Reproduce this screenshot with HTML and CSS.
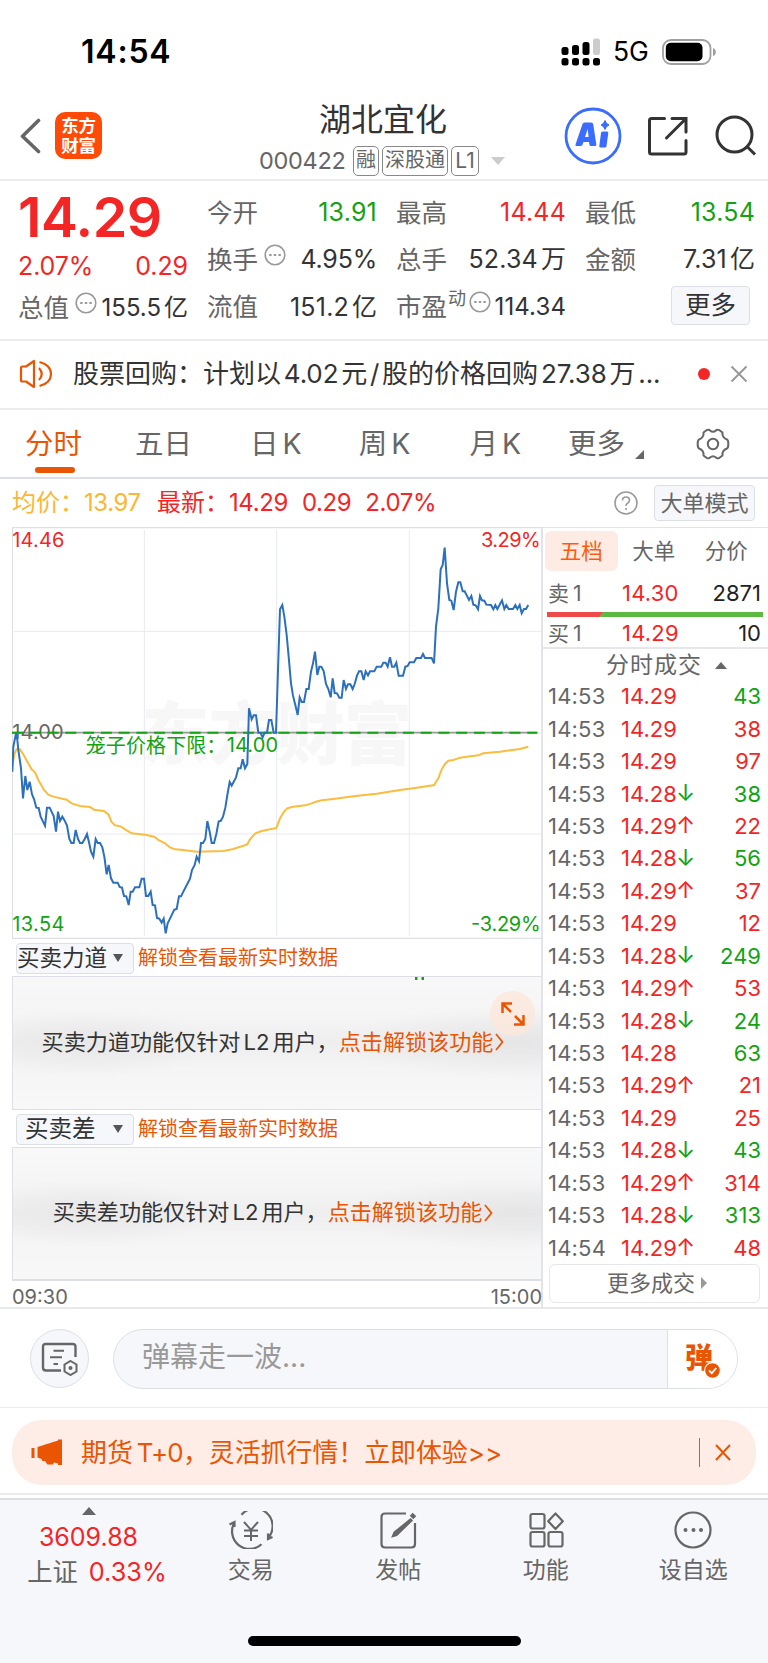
FILE: index.html
```html
<!DOCTYPE html>
<html lang="zh-CN">
<head>
<meta charset="utf-8">
<title>湖北宜化 000422</title>
<link rel="stylesheet" href="styles.css">
</head>
<body>
<div class="status">
  <span class="clock">14:54</span>
  <svg class="signal" width="41" height="28" viewBox="0 0 41 28"><g fill="#000"><rect x="0.5" y="9" width="7" height="8" rx="2.5"/><rect x="11" y="7" width="7" height="10" rx="2.5"/><rect x="21.5" y="4" width="7" height="13" rx="2.5"/><rect x="0.5" y="20" width="7" height="7.5" rx="2.5"/><rect x="11" y="20" width="7" height="7.5" rx="2.5"/><rect x="21.5" y="20" width="7" height="7.5" rx="2.5"/><rect x="32" y="20" width="7" height="7.5" rx="2.5"/></g><rect x="32" y="0.5" width="7" height="16.5" rx="2.5" fill="#ccc"/></svg>
  <span class="net">5G</span>
  <svg class="battery" width="54" height="26" viewBox="0 0 54 26"><rect x="1" y="1" width="47.500" height="24" rx="8" fill="none" stroke="#a0a0a0" stroke-width="1.800"/><rect x="3.800" y="3.800" width="36.700" height="18.400" rx="5" fill="#000"/><path d="M51 9Q53.800 10 53.800 13T51 17z" fill="#a0a0a0"/></svg>
</div>

<header class="head">
  <div class="left">
    <svg width="22" height="36" viewBox="0 0 22 36" fill="none" stroke="#666" stroke-width="3.600" stroke-linecap="round" stroke-linejoin="round"><path d="M19.500 2.500L3.500 18.200L19.500 33.500"/></svg>
    <span class="logo"><b>东方</b><b>财富</b></span>
  </div>
  <div class="title">
    <h1>湖北宜化</h1>
    <div class="code"><span class="num">000422</span><i>融</i><i class="w3">深股通</i><i class="w2">L1</i><svg width="14" height="8" viewBox="0 0 14 8"><path d="M0 0H14L7 8z" fill="#ccc"/></svg></div>
  </div>
  <div class="tools">
    <svg width="58" height="58" viewBox="0 0 58 58"><circle cx="29" cy="29" r="27" fill="none" stroke="#3a6cff" stroke-width="2.800"/><path d="M20.500 15.500H27Q29 15.500 29.300 17.500L32.300 37.500Q32.300 39 31 39H27Q25.500 39 25.400 37.500L25 35H19.500L18.500 37.500Q18 39 16.500 39H12.500Q11 39 11.500 37.500L18.500 17Q19 15.500 20.500 15.500zM23.700 22L21 30H24.600z" fill="#3a6cff" fill-rule="evenodd"/><path d="M38.500 24.500H43Q44.500 24.500 44.300 26L42.500 39Q42.300 40.500 41 40.500H36.500Q35 40.500 35.300 39L37 26Q37.200 24.500 38.500 24.500z" fill="#3a6cff"/><path d="M41 13.500Q42 17 45 18Q42 19 41 22.500Q40 19 37 18Q40 17 41 13.500z" fill="#3a6cff" stroke="#3a6cff"/></svg>
    <svg width="42" height="42" viewBox="0 0 42 42" fill="none" stroke="#333" stroke-width="3"><path d="M17.500 3.500H4.500Q2.500 3.500 2.500 5.500V37Q2.500 39 4.500 39H37Q39 39 39 37V25.500M25 3.500H39V17M38.500 4L19.500 23" stroke-linecap="round"/></svg>
    <svg width="42" height="42" viewBox="0 0 42 42" fill="none" stroke="#333" stroke-width="3"><circle cx="19.500" cy="19.500" r="17.500"/><path d="M31.500 31L40 39.500"/></svg>
  </div>
</header>

<section class="quote">
  <div class="main">
    <div class="price">14.29</div>
    <div class="pair red"><span class="n">2.07%</span><span class="n">0.29</span></div>
    <div class="pair row3"><span class="k">总值</span><svg class="dots" width="22" height="22" viewBox="0 0 22 22"><circle cx="11" cy="11" r="9.800" fill="none" stroke="#999" stroke-width="1.600"/><path d="M5.200 11h2.400m2.200 0h2.400m2.200 0h2.400" stroke="#999" stroke-width="2.200"/></svg><span class="n dk">155.5<em>亿</em></span></div>
  </div>
  <div class="col">
    <div class="pair"><span class="k">今开</span><span class="n green">13.91</span></div>
    <div class="pair"><span class="k">换手</span><svg class="dots" width="22" height="22" viewBox="0 0 22 22"><circle cx="11" cy="11" r="9.800" fill="none" stroke="#999" stroke-width="1.600"/><path d="M5.200 11h2.400m2.200 0h2.400m2.200 0h2.400" stroke="#999" stroke-width="2.200"/></svg><span class="n dk pct">4.95%</span></div>
    <div class="pair"><span class="k">流值</span><span class="n dk">151.2<em>亿</em></span></div>
  </div>
  <div class="col">
    <div class="pair"><span class="k">最高</span><span class="n red">14.44</span></div>
    <div class="pair"><span class="k">总手</span><span class="n dk">52.34<em>万</em></span></div>
    <div class="pair"><span class="k">市盈</span><sup>动</sup><svg class="dots" width="22" height="22" viewBox="0 0 22 22"><circle cx="11" cy="11" r="9.800" fill="none" stroke="#999" stroke-width="1.600"/><path d="M5.200 11h2.400m2.200 0h2.400m2.200 0h2.400" stroke="#999" stroke-width="2.200"/></svg><span class="n dk sm">114.34</span></div>
  </div>
  <div class="col">
    <div class="pair"><span class="k">最低</span><span class="n green">13.54</span></div>
    <div class="pair"><span class="k">金额</span><span class="n dk">7.31<em>亿</em></span></div>
    <div class="pair"><button class="more">更多</button></div>
  </div>
</section>

<section class="notice">
  <svg width="34" height="30" viewBox="0 0 34 30" fill="none" stroke="#ea5504" stroke-width="2.200"><path d="M2 9Q2 7.500 3.500 7.500H7L15 2V28L7 22.500H3.500Q2 22.500 2 21z" stroke-linejoin="round"/><path d="M20 9Q25.500 15 20 21M20.500 3Q32 6 32 15T20.500 27" /></svg>
  <span class="msg">股票回购：计划以<u>4.02</u>元<u>/</u>股的价格回购<u>27.38</u>万<u>...</u></span>
  <b class="dot"></b>
  <svg width="18" height="18" viewBox="0 0 18 18" stroke="#999" stroke-width="2"><path d="M1.500 1.500L16.500 16.500M16.500 1.500L1.500 16.500"/></svg>
</section>

<nav class="tabs">
  <span class="on">分时</span><span>五日</span><span>日<u>K</u></span><span>周<u>K</u></span><span>月<u>K</u></span><span>更多</span>
  <svg class="corner" width="9" height="9" viewBox="0 0 9 9"><path d="M9 0V9H0z" fill="#666"/></svg>
  <svg class="gear" width="34" height="34" viewBox="0 0 34 34" fill="none" stroke="#666" stroke-width="2"><path d="M10.500 3.200Q13 2 14 3.500Q17 6 20 3.500Q21 2 23.500 3.200L26.500 5.500Q25.800 10.500 31 12.500Q32.500 13.500 32.300 17Q32.500 20.500 31 21.500Q25.800 23.500 26.500 28.500L23.500 30.800Q21 32 20 30.500Q17 28 14 30.500Q13 32 10.500 30.800L7.500 28.500Q8.200 23.500 3 21.500Q1.500 20.500 1.700 17Q1.500 13.500 3 12.500Q8.200 10.500 7.500 5.500z" stroke-linejoin="round"/><circle cx="17" cy="17" r="5.200"/></svg>
</nav>

<div class="info">
  <span class="avg">均价：<u>13.97</u></span>
  <span class="last red">最新：<u>14.29</u><u>0.29</u><u>2.07%</u></span>
  <svg width="24" height="24" viewBox="0 0 24 24" fill="none" stroke="#999" stroke-width="1.600"><circle cx="12" cy="12" r="11"/><path d="M8.500 9.500Q8.500 6 12 6T15.500 9.300Q15.500 11 13.500 12.200Q12 13 12 15M12 17v2"/></svg>
  <button>大单模式</button>
</div>

<main class="board">
  <div class="charts">
    <svg class="chart" width="530" height="412" viewBox="36 21 1590 1236" fill="none">
      <text class="wm" x="424" y="718" textLength="812">东方财富</text>
      <path d="M37 1257V23H1626M36 1255H1626" stroke="#dddfe4" stroke-width="4"/>
      <path d="M433 30V1248M830 30V1248M1228 30V1248M37 334H1626M37 942H1626" stroke="#e8eaf2" stroke-width="3"/>
      <path d="M36 638H1612" stroke="#999" stroke-width="5"/>
      <text x="37" y="658" textLength="154" fill="#666">14.00</text>
      <path d="M36 638H1612" stroke="#12a312" stroke-width="6" stroke-dasharray="33 20.300"/>
      <polyline stroke="#fcbc3c" stroke-width="6" points="36,740 44,700 50,688 60,688 68,700 95,748 105,757 115,780 125,797 132,810 145,824 160,830 200,839 215,850 240,858 270,861 282,869 312,873 326,884 334,905 345,916 362,919 380,931 395,940 435,944 463,950 475,960 495,970 510,982 525,988 550,990 590,995 670,993 700,987 742,973 750,958 766,940 785,933 829,924 840,895 852,875 862,865 875,861 915,856 935,850 945,846 965,841 1000,837 1060,829 1130,821 1200,810 1250,803 1303,795 1308,785 1315,775 1325,748 1335,732 1345,722 1360,720 1380,713 1400,710 1435,706 1450,700 1500,695 1560,687 1585,680"/>
      <polyline stroke="#2c70bd" stroke-width="6" points="37,755 40,680 48,640 52,660 55,690 58,710 63,745 69,835 76,768 82,810 89,785 96,823 102,837 109,863 116,864 122,890 129,905 135,917 141,863 149,863 161,888 168,935 174,875 180,903 187,890 194,902 201,917 208,957 214,969 221,969 227,930 234,957 240,969 247,969 254,957 261,942 267,967 273,995 280,1010 287,957 293,969 300,969 307,982 313,1010 320,1063 326,1035 333,1075 340,1088 353,1088 359,1101 366,1103 372,1128 379,1129 386,1155 392,1115 398,1115 405,1102 418,1102 425,1076 432,1076 438,1128 445,1128 452,1115 458,1155 465,1156 471,1194 478,1196 485,1208 491,1196 497,1240 503,1210 510,1196 523,1169 530,1167 537,1129 543,1129 550,1115 563,1090 570,1076 576,1050 584,1035 590,1010 597,1024 603,969 609,969 616,957 622,903 629,935 635,969 642,969 649,942 656,904 662,903 669,890 676,863 682,825 689,786 695,797 702,784 708,772 715,745 722,745 728,718 735,745 742,732 747,565 755,598 761,586 768,586 775,638 781,638 788,652 794,638 801,638 807,600 814,600 821,638 828,638 834,450 840,268 847,255 853,290 860,345 866,410 873,490 879,527 886,555 893,585 899,532 905,546 912,546 919,507 926,507 933,455 939,430 945,395 952,465 958,440 964,440 971,453 978,492 985,507 992,532 998,475 1004,519 1011,520 1018,533 1025,533 1031,480 1038,507 1044,493 1051,493 1058,507 1064,492 1071,467 1077,454 1084,454 1091,480 1097,454 1104,466 1110,454 1123,454 1130,440 1144,440 1150,428 1157,428 1163,440 1170,412 1176,440 1183,440 1189,428 1196,467 1209,467 1216,440 1223,438 1229,427 1242,427 1249,414 1263,414 1269,402 1275,414 1295,414 1302,430 1308,320 1315,265 1322,148 1328,135 1334,83 1341,190 1348,240 1354,242 1361,270 1368,215 1375,187 1381,187 1388,214 1394,214 1407,240 1414,228 1420,254 1427,256 1434,268 1440,228 1446,241 1453,242 1459,254 1473,255 1480,268 1486,255 1492,267 1506,241 1513,267 1519,255 1526,267 1539,267 1546,255 1552,267 1559,255 1565,280 1572,267 1578,267 1585,255"/>
      <text x="37" y="81" textLength="156" fill="#f42525">14.46</text>
      <text x="1443" y="81" textLength="179" fill="#f42525">3.29%</text>
      <text x="37" y="1233" textLength="156" fill="#12a312">13.54</text>
      <text x="1413" y="1233" textLength="209" fill="#12a312">-3.29%</text>
      <text x="257" y="698" textLength="362" fill="#12a312">笼子价格下限</text>
      <text x="619" y="698" fill="#12a312">：</text>
      <text x="680" y="697" textLength="154" fill="#12a312">14.00</text>
    </svg>
    <div class="bar"><button class="pick tight">买卖力道<svg width="10" height="8" viewBox="0 0 10 8"><path d="M0 0H10L5 8z" fill="#555"/></svg></button><span>解锁查看最新实时数据</span></div>
    <div class="lock"><svg class="ticks" width="9" height="3" viewBox="0 0 9 3"><path d="M0 0h2.500v3H0zM6.500 0H9v3H6.500z" fill="#12a312"/></svg><p>买卖力道功能仅针对<u>L2</u>用户，<b>点击解锁该功能</b><svg width="9" height="18" viewBox="0 0 9 18"><path d="M1 1L7.500 9L1 17" fill="none" stroke="#ea5504" stroke-width="1.800"/></svg></p>
      <span class="expand"><svg width="24" height="24" viewBox="0 0 24 24" fill="none" stroke="#ea5504" stroke-width="2.500"><path d="M1.500 11V1.500H11M2 2L10 10M14 14L22 22M22.500 13V22.500H13"/></svg></span></div>
    <div class="bar second"><button class="pick">买卖差<svg width="10" height="8" viewBox="0 0 10 8"><path d="M0 0H10L5 8z" fill="#555"/></svg></button><span>解锁查看最新实时数据</span></div>
    <div class="lock two"><p>买卖差功能仅针对<u>L2</u>用户，<b>点击解锁该功能</b><svg width="9" height="18" viewBox="0 0 9 18"><path d="M1 1L7.500 9L1 17" fill="none" stroke="#ea5504" stroke-width="1.800"/></svg></p></div>
    <div class="axis"><span>09:30</span><span>15:00</span></div>
  </div>

  <aside class="depth">
    <div class="dtabs"><span class="on">五档</span><span>大单</span><span>分价</span></div>
    <div class="lv"><span>卖<u>1</u></span><span class="red">14.30</span><span>2871</span></div>
    <svg class="ratio" width="216" height="5" viewBox="0 0 216 5"><path d="M0 0H216V5H0z" fill="#5cba42"/><path d="M0 0H56L52 5H0z" fill="#ee4a4a"/></svg>
    <div class="lv"><span>买<u>1</u></span><span class="red">14.29</span><span>10</span></div>
    <div class="dealh">分时成交<svg width="12" height="7" viewBox="0 0 12 7"><path d="M0 7L6 0L12 7z" fill="#666"/></svg></div>
    <div class="deals">
      <div><span>14:53</span><span>14.29</span><b class="green">43</b></div>
      <div><span>14:53</span><span>14.29</span><b>38</b></div>
      <div><span>14:53</span><span>14.29</span><b>97</b></div>
      <div class="dn"><span>14:53</span><span>14.28</span><b>38</b></div>
      <div class="up"><span>14:53</span><span>14.29</span><b>22</b></div>
      <div class="dn"><span>14:53</span><span>14.28</span><b>56</b></div>
      <div class="up"><span>14:53</span><span>14.29</span><b>37</b></div>
      <div><span>14:53</span><span>14.29</span><b>12</b></div>
      <div class="dn"><span>14:53</span><span>14.28</span><b>249</b></div>
      <div class="up"><span>14:53</span><span>14.29</span><b>53</b></div>
      <div class="dn"><span>14:53</span><span>14.28</span><b>24</b></div>
      <div><span>14:53</span><span>14.28</span><b class="green">63</b></div>
      <div class="up"><span>14:53</span><span>14.29</span><b>21</b></div>
      <div><span>14:53</span><span>14.29</span><b>25</b></div>
      <div class="dn"><span>14:53</span><span>14.28</span><b>43</b></div>
      <div class="up"><span>14:53</span><span>14.29</span><b>314</b></div>
      <div class="dn"><span>14:53</span><span>14.28</span><b>313</b></div>
      <div class="up"><span>14:54</span><span>14.29</span><b>48</b></div>
    </div>
    <button class="moredeal">更多成交<svg width="6" height="12" viewBox="0 0 6 12"><path d="M0 0L6 6L0 12z" fill="#999"/></svg></button>
  </aside>
</main>

<section class="chat">
  <span class="round"><svg width="38" height="34" viewBox="0 0 38 34" fill="none" stroke="#666" stroke-width="2.400"><path d="M34.500 15V5Q34.500 2 31.500 2H5Q2 2 2 5V25.500Q2 28.500 5 28.500H20"/><path d="M12.500 8.800H23M9 15.200H21M12.500 22H17" stroke-width="2"/><path d="M29.500 19L35.500 22.500V29.500L29.500 33L23.500 29.500V22.500z" stroke-width="2"/><circle cx="29.500" cy="26" r="2" fill="#666" stroke="none"/></svg></span>
  <div class="field"><span>弹幕走一波<u>...</u></span><div class="send"><b>弹</b><svg width="17" height="17" viewBox="0 0 17 17"><circle cx="8.500" cy="8.500" r="7.900" fill="#ea5504" stroke="#fff" stroke-width="1.200"/><path d="M5 8.500L7.800 11.200L12.300 6" fill="none" stroke="#fff" stroke-width="1.800"/></svg></div></div>
</section>

<section class="promo">
  <div>
    <svg width="32" height="27" viewBox="0 0 32 27" fill="#ea5504"><rect x="0.500" y="9" width="3" height="10"/><path d="M6.500 8L27 1.500V0.500H31V26H27V24.500L23 23.500L22 25.500H16.500L14 22H11.500L10.500 20L6.500 18.500z"/></svg>
    <span>期货<u class="t0">T+0</u>，灵活抓行情！立即体验<u>&gt;&gt;</u></span>
    <i></i>
    <svg width="16" height="17" viewBox="0 0 16 17" stroke="#ea5504" stroke-width="2"><path d="M1 1L15 16M15 1L1 16"/></svg>
  </div>
</section>

<footer>
  <div class="items">
    <div class="index"><svg width="14" height="8" viewBox="0 0 14 8"><path d="M0 8L7 0L14 8z" fill="#666"/></svg><span class="red">3609.88</span><p>上证<span class="red">0.33%</span></p></div>
    <div class="item"><svg width="44" height="38" viewBox="0 0 44 38" fill="none" stroke="#666" stroke-width="2.200"><path d="M12.500 3.800A17.500 17.500 0 0 1 39.500 26.500M32.500 33.200A17.500 17.500 0 0 1 5.500 11.500M0.500 13.500L5.500 11V16M39 22.500V28L43.500 26"/><path d="M15 11L22 18.800L29 11M22 18.800V30M15 19.500H29M15 25H29" stroke-width="2"/></svg><span>交易</span></div>
    <div class="item"><svg width="44" height="38" viewBox="0 0 44 38" fill="none" stroke="#666" stroke-width="2.200"><path d="M30 2.500H9Q5.500 2.500 5.500 6V33Q5.500 36.500 9 36.500H35.500Q39 36.500 39 33V12"/><path d="M34.500 8.500L35.500 9.500L20.500 24L17 25L18.500 21.500z" fill="#666"/><path d="M35.500 6.500L38.500 3.500" stroke-width="5"/></svg><span>发帖</span></div>
    <div class="item"><svg width="44" height="38" viewBox="0 0 44 38" fill="none" stroke="#666" stroke-width="2.200"><rect x="6.500" y="3" width="14" height="14.500" rx="2"/><rect x="6.500" y="21" width="14" height="14.500" rx="2"/><rect x="24.500" y="21" width="14" height="14.500" rx="2"/><path d="M31.500 2.500L38.800 10.200L31.500 18L24.200 10.200z" stroke-linejoin="round"/></svg><span>功能</span></div>
    <div class="item"><svg width="44" height="38" viewBox="0 0 44 38"><circle cx="22" cy="19" r="17.500" fill="none" stroke="#666" stroke-width="2.200"/><g fill="#666"><circle cx="14.500" cy="19" r="2"/><circle cx="22.500" cy="19" r="2"/><circle cx="30" cy="19" r="2"/></g></svg><span>设自选</span></div>
  </div>
  <div class="home"></div>
</footer>
</body>
</html>
```
FILE: styles.css
```css
* { box-sizing: border-box; margin: 0; padding: 0; }
body { width: 768px; height: 1663px; background: #fff; color: #333; font-family: Inter, "Noto Sans CJK SC", sans-serif; overflow: hidden; font-size: 22px; line-height: 1; }
svg { display: block; flex: none; }
u, i, em { text-decoration: none; font-style: normal; }
button { font: inherit; color: inherit; border: 1.5px solid #dcdfe6; border-radius: 4px; background: #f6f7fa; white-space: nowrap; }
span, p, h1 { white-space: nowrap; }
.red { color: #f42525; }
.green { color: #12a312; }

.status { height: 103px; padding: 0 52px 0 81px; display: flex; align-items: center; color: #000; }
.clock { font-size: 32px; font-weight: 600; letter-spacing: 0.8px; margin-right: auto; }
.signal { margin-right: 11px; }
.net { font-size: 26.5px; font-weight: 400; width: 36px; margin-right: 13px; letter-spacing: 0; }

.head { height: 78px; border-bottom: 2px solid #ececee; display: grid; grid-template-columns: 259px 1fr 204px; }
.left { display: flex; align-items: center; padding: 0 0 11px 19px; gap: 14px; }
.logo { width: 47px; height: 47px; border-radius: 10px; background: #ff4a08; color: #fff; display: flex; flex-direction: column; align-items: center; justify-content: center; }
.logo b { font-size: 17.5px; line-height: 19.5px; font-weight: 700; letter-spacing: -0.3px; }
.title h1 { font-size: 32px; font-weight: 400; line-height: 34px; padding-left: 60px; }
.code { display: flex; align-items: center; margin-top: 9px; color: #666; }
.code .num { font-size: 23.5px; width: 94px; letter-spacing: -0.3px; }
.code i { font-size: 20px; line-height: 27px; height: 30px; border: 1.5px solid #888; border-radius: 5px; width: 26px; text-align: center; margin-right: 3px; }
.code .w3 { width: 66px; }
.code .w2 { width: 28px; font-size: 21px; margin-right: 12px; }
.tools { display: flex; align-items: center; padding-bottom: 11px; }
.tools svg:nth-child(2) { margin: 0 26px 0 25px; }

.quote { height: 160px; border-bottom: 2px solid #ececee; display: grid; grid-template-columns: 170px 170px 170px 170px; column-gap: 19px; padding: 8px 0 0 18px; font-size: 25px; }
.pair { height: 47.3px; display: flex; align-items: center; position: relative; }
.pair .n { margin-left: auto; letter-spacing: 0.2px; white-space: nowrap; }
.k { color: #666; font-size: 25.5px; }
.dk { color: #333; }
.n em { margin-left: 3px; letter-spacing: 0; }
.pair .pct { letter-spacing: -0.2px; }
.price { font-size: 55.5px; font-weight: 600; color: #f42525; height: 57px; line-height: 56px; letter-spacing: -0.5px; }
.main .pair.red { height: 40px; }
.main .pair.red .n { letter-spacing: -0.1px; }
.main .row3 { height: 44px; }
.main .pair.red .n:first-child { margin-left: 0; }
.pair .dots { margin: -10px 0 0 6px; }
.main .n.dk, .sm { font-size: 24px; }
.main .row3 .n { letter-spacing: 0; }
.pair .n.sm { letter-spacing: 0.1px; }
.pair sup { font-size: 18px; color: #666; margin: -16px 0 0 1px; }
.pair sup + .dots { margin-left: 3px; }
.more { width: 79px; height: 39px; margin: -4px 5px 0 auto; font-size: 25.5px; }

.notice { height: 69px; border-bottom: 2px solid #ececee; display: flex; align-items: center; padding: 0 20px 1px 19px; }
.msg { font-size: 26px; margin-left: 20px; width: 607px; letter-spacing: 0; }
.msg u { letter-spacing: -0.1px; padding: 0 2.8px; }
.dot { width: 12px; height: 12px; border-radius: 50%; background: #f42525; margin: 0 20px 0 20px; }

.tabs { height: 69px; border-bottom: 2px solid #dddfe6; position: relative; display: flex; align-items: center; font-size: 28.5px; color: #666; padding: 1px 0 0 25px; }
.tabs u { margin-left: 4px; letter-spacing: -1px; }
.tabs .on { color: #ea5504; }
.tabs .on::after { content: ""; position: absolute; left: 35px; bottom: 4px; width: 40px; height: 6px; border-radius: 3px; background: #ea5504; }
.tabs span:nth-child(2) { margin-left: 53px; }
.tabs span:nth-child(3) { margin-left: 58px; }
.tabs span:nth-child(4) { margin-left: 58px; }
.tabs span:nth-child(5) { margin-left: 60px; }
.tabs span:nth-child(6) { margin-left: 48px; }
.corner { margin: 20px 0 0 10px; }
.gear { margin-left: auto; margin-right: 38px; }

.info { height: 48px; display: flex; align-items: center; font-size: 24px; padding: 0 13px 0 12px; }
.avg { color: #fcb632; width: 145px; }
.info u { margin-right: 14px; letter-spacing: -0.4px; }
.info svg { margin-left: auto; margin-right: 16px; }
.info button { width: 101px; height: 36px; font-size: 22px; color: #666; }

.board { height: 782px; display: grid; grid-template-columns: 543px 225px; border-bottom: 2px solid #e8e9ec; }
.charts { padding-left: 12px; border-right: 2px solid #e2e4ea; }
.chart text { font-size: 60px; }
.chart .wm { font-size: 204px; font-weight: 900; fill: #f7f7f7; }
.bar { height: 38px; display: flex; align-items: center; padding: 1px 0 0 4px; border-bottom: 1.5px solid #dddfe4; font-size: 20px; color: #ea5504; }
.bar.second { height: 39px; border-top: 1.5px solid #dddfe4; }
.pick { width: 118px; height: 31px; margin-right: 4px; color: #333; display: flex; align-items: center; justify-content: space-between; padding: 0 10px 0 8px; font-size: 23.5px; }
.pick.tight { font-size: 22.5px; padding-left: 0; }
.lock { height: 132px; display: flex; justify-content: center; align-items: center; position: relative; border-left: 1.5px solid #dddfe4; font-size: 22.1px; padding: 0 8px 2px 0; background: radial-gradient(ellipse 24% 26% at 14% 50%, #e8e8e8, transparent), radial-gradient(ellipse 34% 28% at 96% 50%, #e6e6e6, transparent), linear-gradient(#f8f8f8, #f5f5f5 30%, #eee 50%, #f5f5f5 70%, #f8f8f8); }
.lock p { display: flex; align-items: center; }
.lock u { margin: 0 3px; }
.lock b { font-weight: 400; color: #ea5504; }
.lock p svg { margin-left: 2px; }
.two { border-bottom: 2px solid #dddfe4; height: 133px; }
.ticks { position: absolute; left: 402px; top: 0; }
.expand { position: absolute; right: 6px; top: 14px; width: 45px; height: 45px; border-radius: 50%; background: rgba(253, 231, 219, .8); display: flex; align-items: center; justify-content: center; }
.axis { height: 28px; display: flex; justify-content: space-between; align-items: center; font-size: 20px; color: #666; padding-top: 3px; margin-right: -1px; }

.depth { padding: 3px 7px 0 2px; border-top: 1.5px solid #e2e4ea; font-size: 22px; }
.dtabs { display: flex; height: 40px; width: 220px; color: #666; font-size: 21.500px; }
.dtabs span { width: 72.5px; padding-top: 1px; display: flex; align-items: center; justify-content: center; }
.dtabs .on { background: #feece4; border-radius: 6px; color: #ff5a0a; }
.lv { display: grid; grid-template-columns: 74px 80px 1fr; height: 41px; align-items: center; color: #222; font-size: 22px; }
.lv span:first-child { color: #666; font-size: 21px; }
.lv span:nth-child(2) { color: #f42525; letter-spacing: 0.2px; }
.lv u { margin-left: 4px; }
.lv span:last-child { text-align: right; }
.depth .lv { padding: 3px 0 0 3px; }
.ratio { margin: 0 -2px 0 2px; }
.depth .ratio + .lv { height: 30px; padding-top: 2px; }
.dealh { margin: 0 -7px 0 -2px; border-top: 2px solid #e6e7ea; height: 34px; display: flex; align-items: center; justify-content: center; font-size: 23px; letter-spacing: 1px; color: #666; padding-left: 22px; }
.dealh svg { margin-left: 13px; }
.deals { margin-top: -1px; }
.deals div { height: 32.45px; display: grid; grid-template-columns: 73px 56px 17px 1fr; align-items: center; padding-left: 3px; color: #f42525; }
.deals span:first-child { color: #666; letter-spacing: 0.2px; }
.deals b { font-weight: 400; text-align: right; grid-column: 4; grid-row: 1; }
.deals .green, .dn b { color: #12a312; }
.up::after, .dn::after { grid-column: 3; grid-row: 1; margin-left: -1px; font-size: 23px; font-family: Inter, sans-serif; }
.up::after { content: "↑"; }
.dn::after { content: "↓"; color: #12a312; }
.moredeal { display: flex; width: 211px; height: 39px; margin-left: 4px; background: #fff; border-color: #e6e7ea; border-radius: 6px; align-items: center; justify-content: center; font-size: 22px; color: #666; padding-left: 5px; }
.moredeal svg { margin-left: 6px; }

.chat { height: 99px; border-bottom: 1.500px solid #ececee; display: flex; align-items: center; padding: 1px 0 0 30px; }
.round { width: 59px; height: 59px; border: 1.5px solid #dcdfe6; border-radius: 50%; background: #f6f7fa; display: flex; align-items: center; justify-content: center; }
.field { margin-left: 24px; width: 625px; height: 60px; border: 1.5px solid #dcdfe6; border-radius: 30px; background: #f6f7fa; display: flex; justify-content: space-between; overflow: hidden; color: #999; font-size: 28px; line-height: 54px; padding-left: 28px; }
.send { width: 70px; border-left: 1.5px solid #dcdfe6; background: #fff; position: relative; }
.send b { display: block; padding-left: 17px; color: #ea5504; font-weight: 900; font-size: 28px; line-height: 57px; }
.send svg { position: absolute; left: 36px; top: 32px; }

.promo { height: 87px; padding: 12px 12px 0; border-bottom: 2px solid #ececee; }
.promo div { height: 65px; border-radius: 30px; background: #fdede6; color: #ea5504; display: flex; align-items: center; font-size: 25.900px; padding: 0 25px 0 19px; }
.promo span { margin-left: 18px; margin-right: auto; }
.t0 { margin-left: 4px; letter-spacing: -0.7px; }
.promo i { width: 1.5px; height: 29px; background: #ea5504; margin-right: 15px; }

footer { margin-top: 3px; height: 165px; border-top: 2px solid #dddfe4; background: #f6f7fa; color: #666; }
.items { height: 136px; display: grid; grid-template-columns: 177px 147.500px 147.500px 147.500px 147.500px; font-size: 23px; }
.index { display: flex; flex-direction: column; align-items: center; padding-top: 7px; font-size: 25px; }
.index .red { letter-spacing: 0; }
.index > span { margin: 10px 0 9px; line-height: 25px; }
.index p { font-size: 25.3px; padding-left: 17px; }
.index p span { margin-left: 11px; }
.item { display: flex; flex-direction: column; align-items: center; padding: 11px 0 0 0; gap: 10px; }
.home { width: 273px; height: 10px; border-radius: 5px; background: #000; margin-left: 248px; }
```
